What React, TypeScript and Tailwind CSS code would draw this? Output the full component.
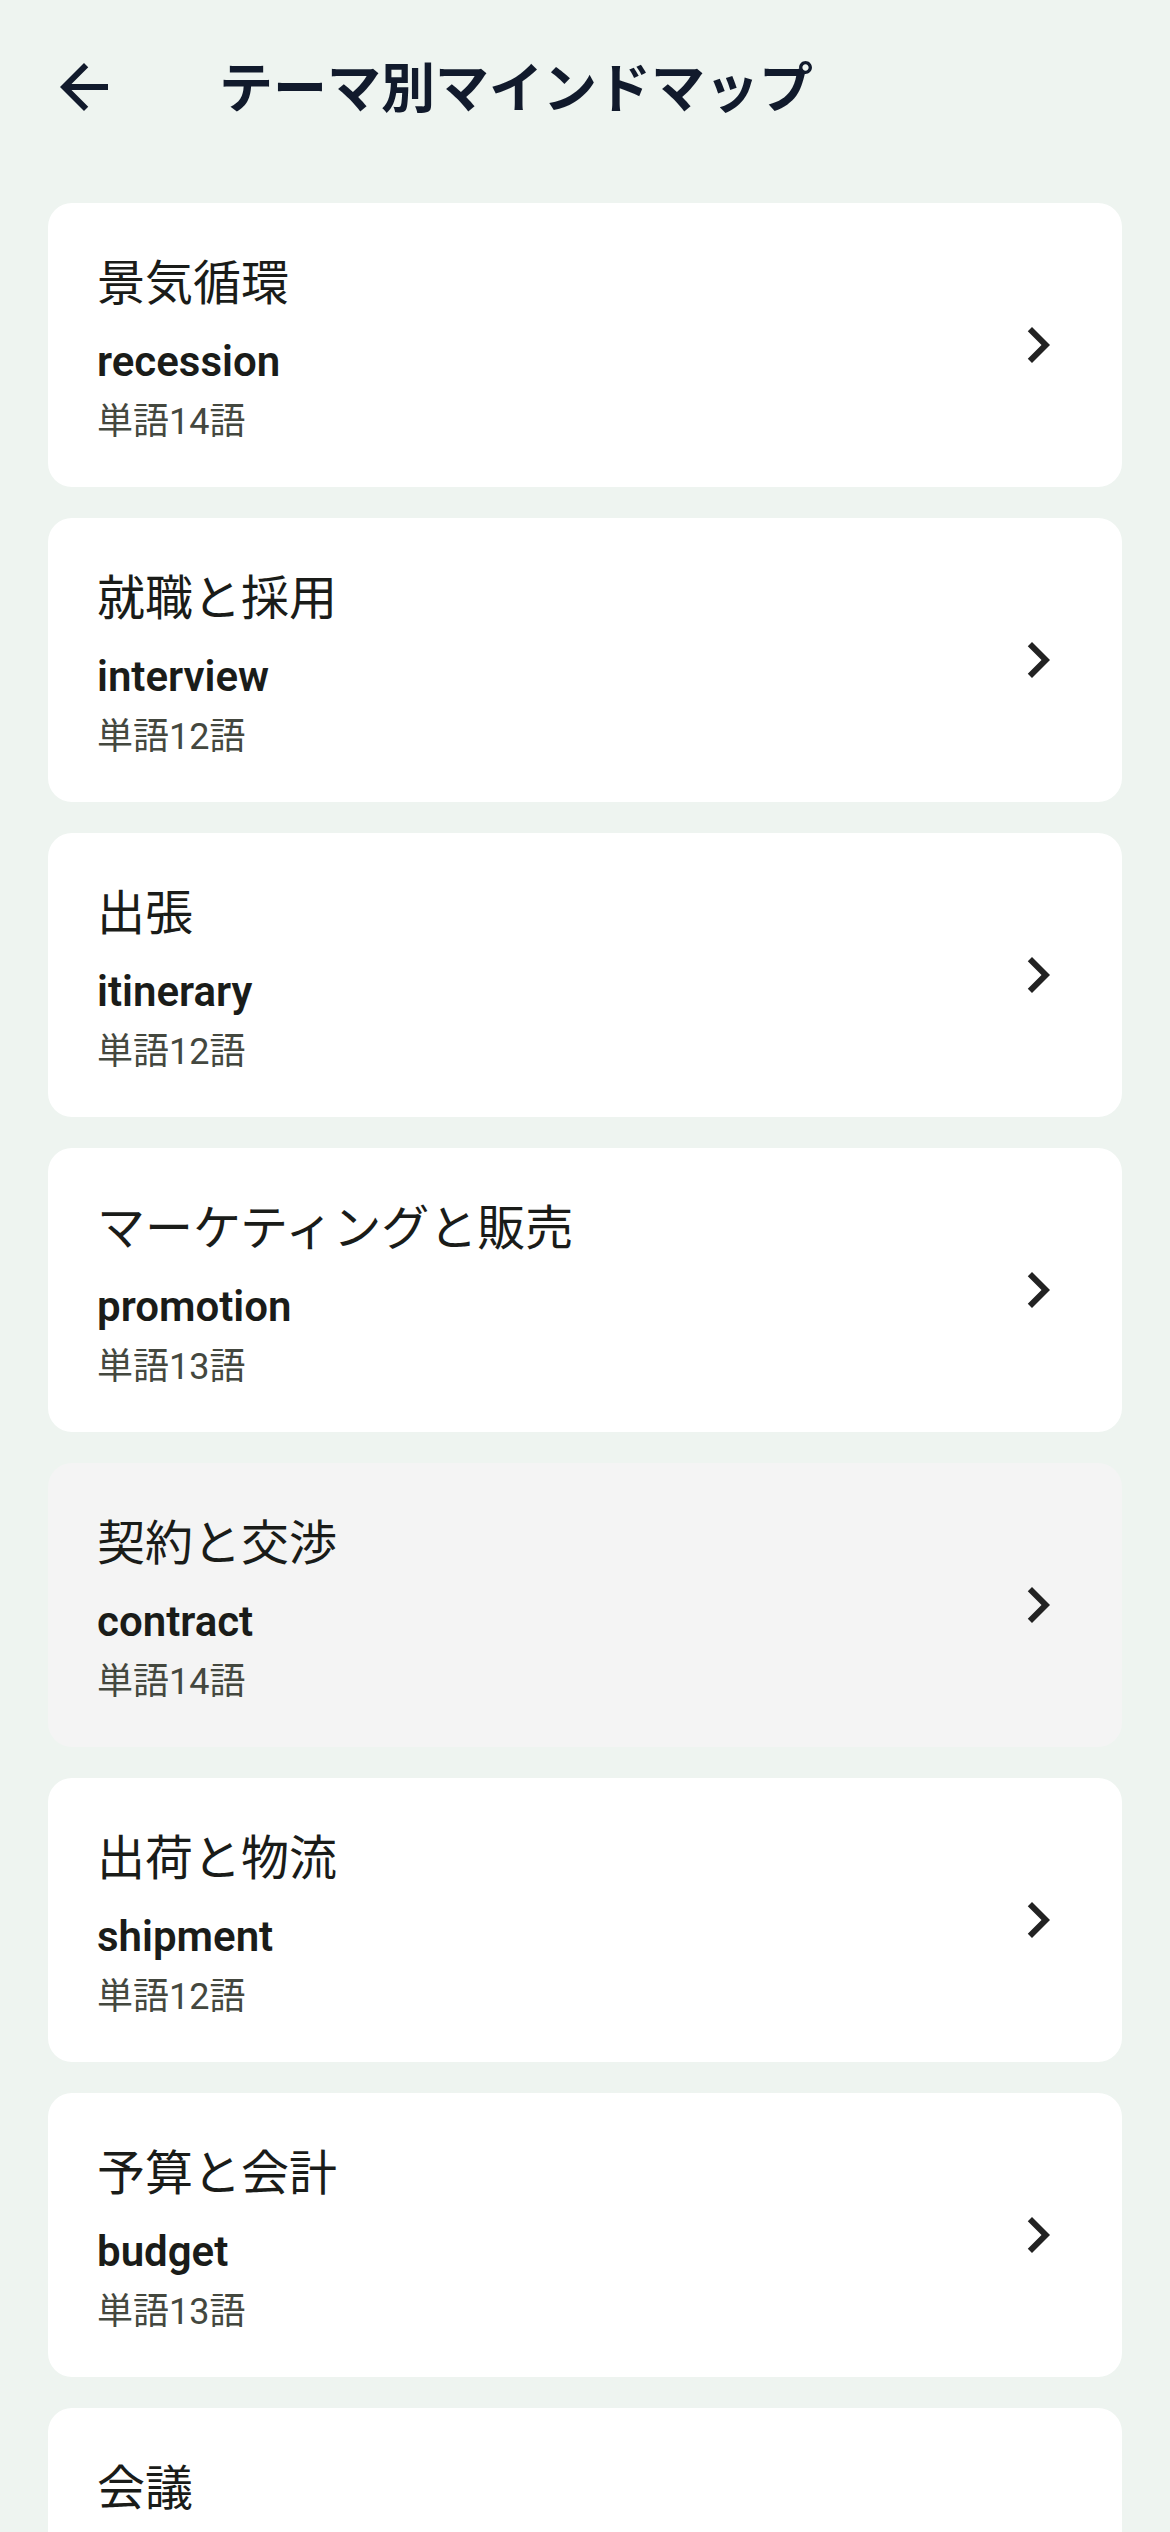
const themes = [
  { title: "景気循環", word: "recession", count: 14 },
  { title: "就職と採用", word: "interview", count: 12 },
  { title: "出張", word: "itinerary", count: 12 },
  { title: "マーケティングと販売", word: "promotion", count: 13 },
  { title: "契約と交渉", word: "contract", count: 14, pressed: true },
  { title: "出荷と物流", word: "shipment", count: 12 },
  { title: "予算と会計", word: "budget", count: 13 },
  { title: "会議", word: "agenda", count: 12 },
];

const font = { fontFamily: 'Roboto, "Noto Sans CJK JP", sans-serif' };

export default function App() {
  return (
    <div className="min-h-screen w-full bg-[#eef4f0]" style={font}>
      {/* Header */}
      <header className="flex items-center px-[48px] pt-[48px]">
        <button type="button" className="w-[72px] h-[72px] flex items-center justify-center">
          <svg viewBox="0 0 24 24" className="w-[72px] h-[72px]" fill="#111a2c">
            <path d="M20 11H7.83l5.59-5.59L12 4l-8 8 8 8 1.41-1.41L7.83 13H20v-2z" />
          </svg>
        </button>
        <h1 className="ml-[99px] mt-[6px] text-[54px] leading-[72px] font-bold text-[#111a2c]">
          テーマ別マインドマップ
        </h1>
      </header>

      {/* Theme list */}
      <div className="flex flex-col gap-[31px] px-[48px] pt-[77px] pb-[48px]">
        {themes.map((t) => (
          <div
            key={t.title}
            className={`h-[284px] rounded-[24px] flex items-center justify-between pl-[49px] pr-[48px] ${
              t.pressed ? "bg-[#f4f4f4]" : "bg-white"
            }`}
          >
            <div className="flex flex-col mt-[8px]">
              <div className="text-[48px] leading-[64px] text-[#1a1c19]">{t.title}</div>
              <div className="mt-[18px] text-[42px] leading-[56px] font-semibold text-[#1a1c19]">
                {t.word}
              </div>
              <div className="mt-[8px] text-[36px] leading-[48px] text-[#44483f]">
                単語{t.count}語
              </div>
            </div>
            <svg viewBox="0 0 24 24" className="w-[72px] h-[72px] shrink-0" fill="#222222">
              <path d="M10 6L8.59 7.41 13.17 12l-4.58 4.59L10 18l6-6z" />
            </svg>
          </div>
        ))}
      </div>
    </div>
  );
}
